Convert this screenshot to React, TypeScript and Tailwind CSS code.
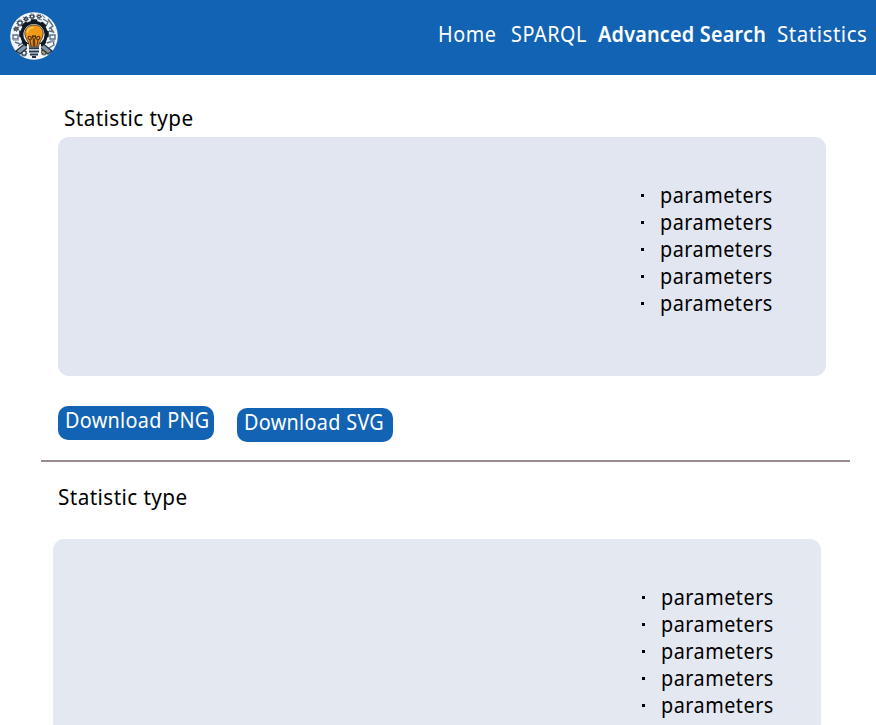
const parameters = [0, 1, 2, 3, 4];
const teeth = [0, 45, 90, 135, 180, 225, 270, 315];

function Cog({ x, y, r }: { x: number; y: number; r: number }) {
  return (
    <g transform={`translate(${x} ${y})`}>
      <circle r={r} fill="none" stroke="#34424f" strokeWidth="1.3" />
      <circle r={r + 1} fill="none" stroke="#34424f" strokeWidth="1" strokeDasharray="1 1.2" />
    </g>
  );
}

function Logo() {
  return (
    <svg className="block h-12 w-12" viewBox="0 0 48 48" aria-label="Logo">
      <circle cx="24" cy="24" r="23.8" fill="#f4f7fa" />
      <g fill="none" stroke="#5c7082" strokeWidth="1.4">
        <path d="M33 7l5 3-2 4M38 7l5 7-4 3M40 15l4 6M3 23h5v4H3zM40 23h5v4h-5zM4 18l5-3M39 19l5 1M5 30l5 2M37 31l6-2 1 4-5 3M8 34l6-4M10 40l8-5M31 35l8 5M36 36l5 2" />
        <path d="M32 3l3 3M28 7l4 1M13 5l4 3M7 17l3 2M3 28h6M40 29h5" stroke="#8ca4b7" />
      </g>
      <Cog x={10} y={11} r={2.2} />
      <Cog x={16} y={7} r={1.5} />
      <Cog x={22} y={4.5} r={1.7} />
      <Cog x={29} y={4.5} r={1.4} />
      <Cog x={6} y={17} r={1.4} />
      <Cog x={14} y={41} r={2.2} />
      <Cog x={34} y={40} r={2.2} />
      <circle cx="34" cy="40" r="1.6" fill="#d99532" />
      <path d="M6 39l11-9 4 3-11 9z M42 39l-11-9-4 3 11 9z" fill="#8294a3" stroke="#1d2f40" strokeWidth="1.2" />
      <g fill="#111a24">
        {teeth.map((angle) => (
          <rect key={angle} x="20.8" y="7.2" width="6.4" height="6" rx="1" transform={`rotate(${angle} 24 22)`} />
        ))}
      </g>
      <circle cx="24" cy="22.5" r="12.2" fill="#edf1f4" stroke="#111a24" strokeWidth="3.2" />
      <path d="M17 32h14v9l-5 5h-4l-5-5z" fill="#f4f7fa" />
      <path d="M24 13c-5.8 0-9.2 3.7-9.2 8.4 0 5.4 4.3 7.6 4.7 13.3h9c.4-5.7 4.7-7.9 4.7-13.3 0-4.7-3.4-8.4-9.2-8.4z" fill="#f29a17" stroke="#3b2a1a" strokeWidth=".8" />
      <path d="M17.3 20.5c.5-2.8 2.8-4.8 6-5" fill="none" stroke="#ffcb55" strokeWidth="1.6" />
      <path d="M21.2 34l-1.3-6c-3-1.5-1.8-4.5.4-3.6 1.8.8.9 3.1.3 3.7M26.8 34l1.3-6c3-1.5 1.8-4.5-.4-3.6-1.8.8-.9 3.1-.3 3.7M23.3 34v-7c-1.6-2.5-.9-4 .7-2.5 1.6-1.5 2.3 0 .7 2.5v7" fill="none" stroke="#4d2b10" strokeWidth="1.1" />
      <path d="M19 36.2h10M19 39.4h10M20 42.4h8" stroke="#24384a" strokeWidth="2" />
      <path d="M22 45h4" stroke="#111a24" strokeWidth="1.8" />
    </svg>
  );
}

function ParameterList() {
  return (
    <ul>
      {parameters.map((item) => (
        <li key={item} className="flex h-[27px] items-center">
          <span className="mt-px mr-4 h-[3px] w-[3px] bg-black" />
          <span className="origin-left scale-x-[0.9] tracking-[0.55px]">parameters</span>
        </li>
      ))}
    </ul>
  );
}

export default function App() {
  return (
    <div className="h-[725px] w-[876px] overflow-hidden bg-white font-['Noto_Sans',sans-serif] text-[22px] leading-[27px] text-black">
      <header className="flex h-[75px] items-start bg-[#1263b3] pl-[10px] text-white">
        <div className="w-[427.5px] pt-3"><Logo /></div>
        <nav className="flex pt-5 whitespace-nowrap">
          <a className="w-[73.5px] origin-left scale-x-[0.9] tracking-[0.6px]">Home</a>
          <a className="w-[87px] origin-left scale-x-[0.9] tracking-[0.6px]">SPARQL</a>
          <a className="w-[178.5px] origin-left scale-x-[0.9] font-semibold tracking-[0.25px]">Advanced Search</a>
          <a className="origin-left scale-x-[0.93] tracking-[0.6px]">Statistics</a>
        </nav>
      </header>
      <main>
        <section className="h-[385px] pt-7">
          <h2 className="ml-[63.5px] w-[140px] origin-left scale-x-[0.94] pt-[0.5px] tracking-[0.45px]">Statistic type</h2>
          <div className="mt-[6.5px] ml-[57.5px] h-[239px] w-[768.5px] rounded-[11px] bg-[#e2e6f1] pt-11 pl-[583px]">
            <ParameterList />
          </div>
          <div className="mt-[30px] ml-[57.5px] flex gap-[23px] whitespace-nowrap text-white">
            <button className="flex h-[34px] w-[156px] rounded-[10px] bg-[#1263b3] pl-[7px]">
              <span className="origin-left scale-x-[0.9] tracking-[0.35px]">Download PNG</span>
            </button>
            <button className="mt-[1.5px] flex h-[34px] w-[156px] rounded-[10px] bg-[#1263b3] pl-[7px]">
              <span className="origin-left scale-x-[0.9] tracking-[0.35px]">Download SVG</span>
            </button>
          </div>
        </section>
        <hr className="ml-[41px] h-[2px] w-[809px] border-0 bg-[#998b90]" />
        <section className="pt-5">
          <h2 className="ml-[57.5px] w-[140px] origin-left scale-x-[0.94] pt-[0.5px] tracking-[0.45px]">Statistic type</h2>
          <div className="mt-[29.5px] ml-[52.5px] h-[239px] w-[768.5px] rounded-[11px] bg-[#e4e8f1] pt-[44px] pl-[589.5px]">
            <ParameterList />
          </div>
        </section>
      </main>
    </div>
  );
}
